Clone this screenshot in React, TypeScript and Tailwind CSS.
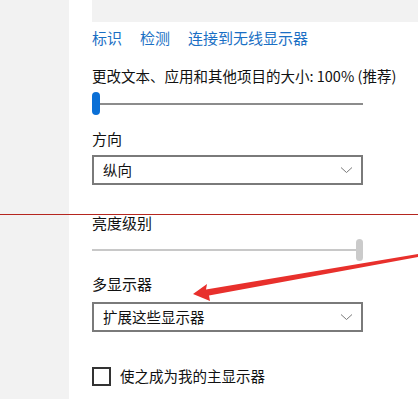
import React from "react";

const font = { fontFamily: '"Microsoft YaHei", "Noto Sans CJK SC", "Noto Sans", sans-serif' };

function Chevron() {
  return (
    <svg width="13" height="8" viewBox="0 0 13 8" className="shrink-0">
      <path d="M1 1.5 L6.5 6.5 L12 1.5" fill="none" stroke="#7a7a7a" strokeWidth="1" />
    </svg>
  );
}

function Dropdown({ value }: { value: string }) {
  return (
    <div className="flex h-[30px] w-[271px] items-center justify-between border-2 border-[#7a7a7a] bg-white pl-[9px] pr-[8px]">
      <span className="text-[14.5px] leading-none text-[#111]">{value}</span>
      <Chevron />
    </div>
  );
}

export default function App() {
  return (
    <div className="relative flex h-[399px] w-[418px] overflow-hidden bg-white" style={font}>
      <div className="w-[69px] shrink-0 bg-[#f2f2f2]" />
      <div className="flex flex-1 flex-col pl-[23px]">
        <div className="h-[22px] bg-[#f2f2f2]" />
        <div className="mt-[5px] flex h-[20px] items-center gap-[18px] text-[15px] leading-none text-[#1a6fc4]">
          <span>标识</span>
          <span>检测</span>
          <span>连接到无线显示器</span>
        </div>
        <div className="mt-[19px] flex h-[20px] items-center whitespace-nowrap text-[14.5px] leading-none text-[#111]">
          更改文本、应用和其他项目的大小: 100% (推荐)
        </div>
        <div className="mt-[6px] flex h-[23px] w-[271px] items-center">
          <div className="h-[23px] w-[8px] shrink-0 rounded-full bg-[#0a6fd6]" />
          <div className="h-[2px] flex-1 bg-[#8c8c8c]" />
        </div>
        <div className="mt-[13px] flex h-[20px] items-center text-[15px] leading-none text-[#111]">方向</div>
        <div className="mt-[7px]">
          <Dropdown value="纵向" />
        </div>
        <div className="mt-[27px] flex h-[20px] items-center text-[15px] leading-none text-[#111]">亮度级别</div>
        <div className="mt-[7px] flex h-[22px] w-[271px] items-center">
          <div className="h-[2px] flex-1 bg-[#c8c8c8]" />
          <div className="h-[22px] w-[7px] shrink-0 rounded-full bg-[#cbcbcb]" />
        </div>
        <div className="mt-[12px] flex h-[20px] items-center text-[15px] leading-none text-[#111]">多显示器</div>
        <div className="mt-[9px]">
          <Dropdown value="扩展这些显示器" />
        </div>
        <div className="mt-[34px] flex h-[20px] items-center gap-[9px]">
          <div className="h-[19px] w-[19px] border-2 border-[#333]" />
          <span className="text-[14.5px] leading-none text-[#111]">使之成为我的主显示器</span>
        </div>
      </div>
      <div className="absolute left-0 top-[214px] h-[1px] w-full bg-[#b5261f]" />
      <svg className="pointer-events-none absolute left-0 top-0" width="418" height="399" viewBox="0 0 418 399">
        <polygon points="193,294 207,284 206,289.5 418,254 418,257 209,295.5 210,301" fill="#e8302c" />
      </svg>
    </div>
  );
}
